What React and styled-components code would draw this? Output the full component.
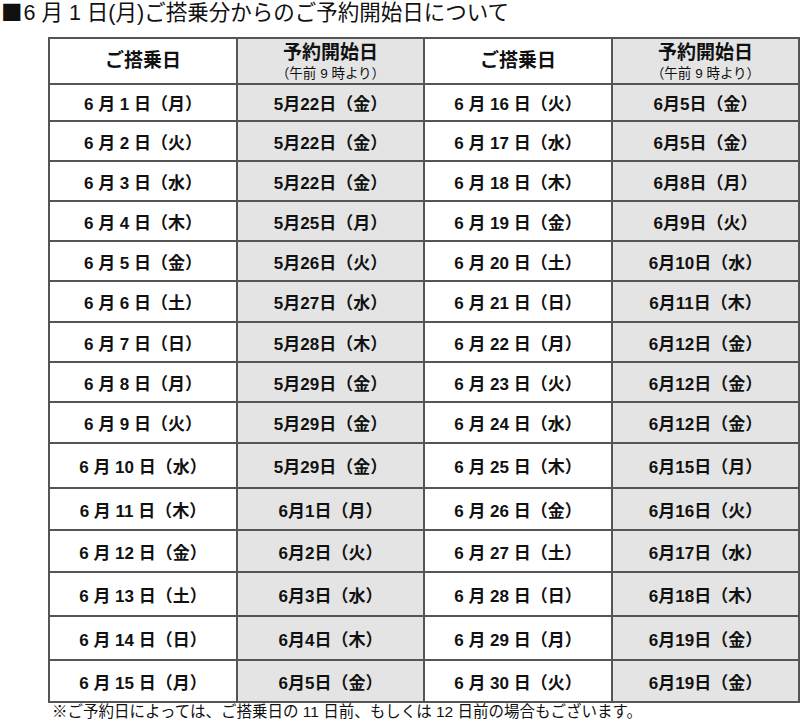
import React from "react";
import styled, { createGlobalStyle } from "styled-components";

const GlobalStyle = createGlobalStyle`
  html, body {
    margin: 0;
    padding: 0;
    background: #ffffff;
  }
  body {
    width: 800px;
    height: 722px;
    overflow: hidden;
    font-family: "Liberation Sans", "Noto Sans CJK JP", sans-serif;
    color: #111;
  }
`;

// left half: 6/1 - 6/15, right half: 6/16 - 6/30
const rows = [
  { h: 37, a: "6 月 1 日（月）", b: "5月22日（金）", c: "6 月 16 日（火）", d: "6月5日（金）" },
  { h: 40, a: "6 月 2 日（火）", b: "5月22日（金）", c: "6 月 17 日（水）", d: "6月5日（金）" },
  { h: 40, a: "6 月 3 日（水）", b: "5月22日（金）", c: "6 月 18 日（木）", d: "6月8日（月）" },
  { h: 40, a: "6 月 4 日（木）", b: "5月25日（月）", c: "6 月 19 日（金）", d: "6月9日（火）" },
  { h: 40, a: "6 月 5 日（金）", b: "5月26日（火）", c: "6 月 20 日（土）", d: "6月10日（水）" },
  { h: 41, a: "6 月 6 日（土）", b: "5月27日（水）", c: "6 月 21 日（日）", d: "6月11日（木）" },
  { h: 40, a: "6 月 7 日（日）", b: "5月28日（木）", c: "6 月 22 日（月）", d: "6月12日（金）" },
  { h: 40, a: "6 月 8 日（月）", b: "5月29日（金）", c: "6 月 23 日（火）", d: "6月12日（金）" },
  { h: 41, a: "6 月 9 日（火）", b: "5月29日（金）", c: "6 月 24 日（水）", d: "6月12日（金）" },
  { h: 45, a: "6 月 10 日（水）", b: "5月29日（金）", c: "6 月 25 日（木）", d: "6月15日（月）" },
  { h: 42, a: "6 月 11 日（木）", b: "6月1日（月）", c: "6 月 26 日（金）", d: "6月16日（火）" },
  { h: 42, a: "6 月 12 日（金）", b: "6月2日（火）", c: "6 月 27 日（土）", d: "6月17日（水）" },
  { h: 44, a: "6 月 13 日（土）", b: "6月3日（水）", c: "6 月 28 日（日）", d: "6月18日（木）" },
  { h: 44, a: "6 月 14 日（日）", b: "6月4日（木）", c: "6 月 29 日（月）", d: "6月19日（金）" },
  { h: 42, a: "6 月 15 日（月）", b: "6月5日（金）", c: "6 月 30 日（火）", d: "6月19日（金）" },
];

const App = () => {
  return (
    <Page>
      <GlobalStyle />
      <Title>
        <Mark>■</Mark>6 月 1 日(月)ご搭乗分からのご予約開始日について
      </Title>
      <Table>
        <colgroup>
          <col style={{ width: 188 }} />
          <col style={{ width: 187 }} />
          <col style={{ width: 188 }} />
          <col style={{ width: 187 }} />
        </colgroup>
        <thead>
          <tr>
            <HeadCell $h={46}>ご搭乗日</HeadCell>
            <HeadCell $h={46} $grey>
              <HeadMain>予約開始日</HeadMain>
              <HeadSub>（午前 9 時より）</HeadSub>
            </HeadCell>
            <HeadCell $h={46}>ご搭乗日</HeadCell>
            <HeadCell $h={46} $grey>
              <HeadMain>予約開始日</HeadMain>
              <HeadSub>（午前 9 時より）</HeadSub>
            </HeadCell>
          </tr>
        </thead>
        <tbody>
          {rows.map((r) => (
            <tr key={r.a}>
              <Cell $h={r.h}>{r.a}</Cell>
              <Cell $h={r.h} $grey>{r.b}</Cell>
              <Cell $h={r.h}>{r.c}</Cell>
              <Cell $h={r.h} $grey>{r.d}</Cell>
            </tr>
          ))}
        </tbody>
      </Table>
      <Note>※ご予約日によっては、ご搭乗日の 11 日前、もしくは 12 日前の場合もございます。</Note>
    </Page>
  );
};

const Page = styled.div`
  display: flex;
  flex-direction: column;
  align-items: flex-start;
  width: 800px;
`;

const Title = styled.div`
  height: 26px;
  padding-left: 1px;
  font-size: 21.5px;
  line-height: 26px;
  font-weight: 400;
  margin-bottom: 11px;
  white-space: nowrap;
`;

const Mark = styled.span`
  font-family: "Noto Sans CJK JP", sans-serif;
  line-height: 1;
  margin-right: 1px;
`;

const Table = styled.table`
  margin-left: 48px;
  width: 750px;
  table-layout: fixed;
  border-collapse: collapse;
  border: 2px solid #4a4a4a;
`;

const Cell = styled.td`
  height: ${(p) => p.$h - 2}px;
  padding: 0;
  border: 2px solid #555;
  background-color: ${(p) => (p.$grey ? "#e4e4e4" : "#ffffff")};
  text-align: center;
  vertical-align: middle;
  font-size: 17px;
  font-weight: 700;
  white-space: nowrap;
`;

const HeadCell = styled(Cell).attrs({ as: "th" })`
  font-size: 19px;
  line-height: 20px;
`;

const HeadMain = styled.div`
  font-size: 19px;
  line-height: 21px;
`;

const HeadSub = styled.div`
  font-size: 13.5px;
  line-height: 15px;
  font-weight: 400;
  margin-top: 3px;
`;

const Note = styled.div`
  margin-left: 52px;
  font-size: 15.5px;
  line-height: 18px;
  white-space: nowrap;
`;

export default App;
